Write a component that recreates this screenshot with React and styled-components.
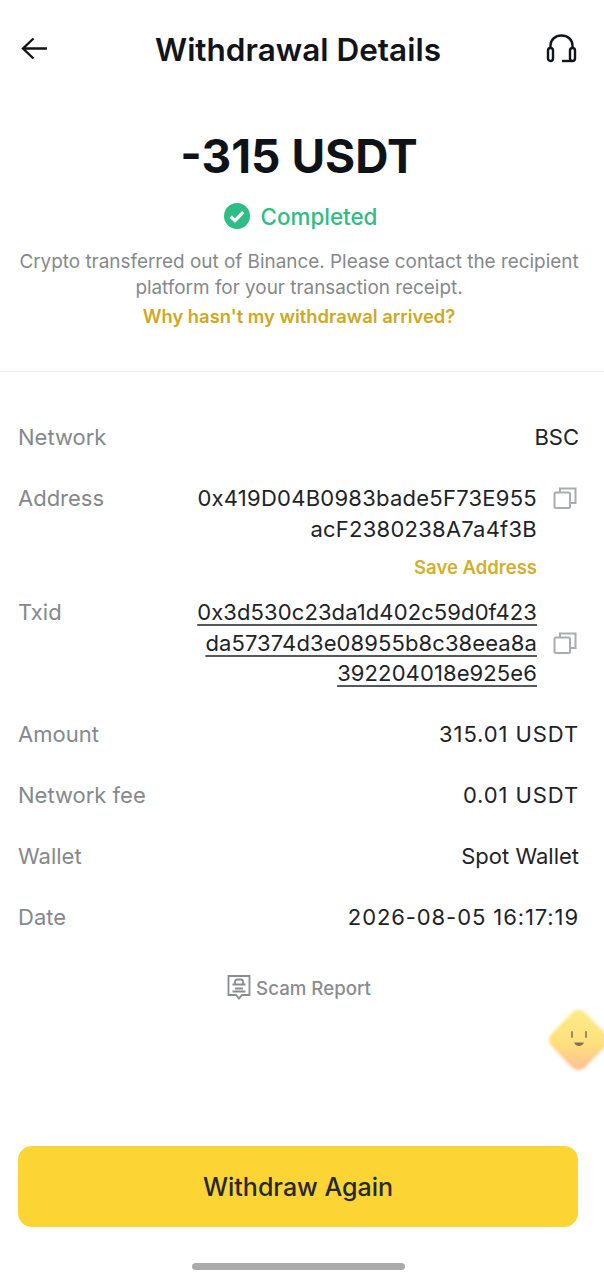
import React from "react";
import styled, { createGlobalStyle } from "styled-components";

const GlobalStyle = createGlobalStyle`
  html, body {
    margin: 0;
    padding: 0;
    background: #fff;
  }
  * {
    box-sizing: border-box;
  }
`;

const Page = styled.div`
  position: relative;
  width: 604px;
  height: 1280px;
  overflow: hidden;
  display: flex;
  flex-direction: column;
  background: #fff;
  color: #1e2329;
  font-family: Inter, "Liberation Sans", sans-serif;
`;

// 상단 헤더
const Header = styled.header`
  height: 100px;
  padding: 0 26px 2px 20px;
  display: flex;
  align-items: center;
  justify-content: space-between;
`;

const Title = styled.h1`
  margin: 0;
  font-size: 31.5px;
  font-weight: 600;
  color: #111418;
`;

const IconButton = styled.span`
  display: flex;
  width: 32px;
  height: 32px;
  align-items: center;
  justify-content: center;
`;

// 금액, 상태
const Summary = styled.section`
  height: 272px;
  padding: 26px 6px 0 0;
  display: flex;
  flex-direction: column;
  align-items: center;
  border-bottom: 1px solid #eeeff1;
`;

const Amount = styled.div`
  font-size: 46px;
  line-height: 60px;
  font-weight: 700;
  color: #0f1216;
`;

const Status = styled.div`
  margin: 15px 0 0 3px;
  height: 30px;
  display: flex;
  align-items: center;
  gap: 11px;
  font-size: 22.4px;
  font-weight: 500;
  color: #2ebd85;
`;

const Notice = styled.p`
  margin: 18px 0 0;
  font-size: 18.9px;
  line-height: 26px;
  color: #85888c;
  text-align: center;
`;

const HelpLink = styled.div`
  margin-top: 2px;
  font-size: 18.4px;
  line-height: 26px;
  font-weight: 600;
  color: #d0a81e;
`;

// 상세 내역
const Details = styled.section`
  padding: 50px 26px 0 18px;
  display: flex;
  flex-direction: column;
`;

const Row = styled.div`
  display: flex;
  justify-content: space-between;
  align-items: flex-start;
  padding-bottom: ${(props) => (props.$tight ? "18px" : "30.5px")};
  font-size: 22px;
  line-height: 30.5px;
`;

const Label = styled.span`
  color: #85888c;
`;

const Value = styled.span`
  color: #1e2329;
  text-align: right;
  margin-right: -1px;
  letter-spacing: ${(props) => (props.$numeric ? "0.9px" : "0")};
`;

const AddressBox = styled.div`
  display: flex;
  align-items: ${(props) => (props.$top ? "flex-start" : "center")};
  gap: 16px;
`;

const Hash = styled.div`
  text-align: right;
  letter-spacing: ${(props) => (props.$link ? "0.1px" : "0.25px")};
  text-decoration: ${(props) => (props.$link ? "underline" : "none")};
  text-decoration-color: #55585c;
  text-underline-offset: 4px;
  text-decoration-thickness: 1.5px;
`;

const CopyButton = styled.span`
  display: flex;
  margin-top: ${(props) => (props.$top ? "3px" : "0")};
`;

const AddressColumn = styled.div`
  display: flex;
  flex-direction: column;
  align-items: flex-end;
  margin-right: 1px;
`;

const SaveAddress = styled.div`
  margin: 11px 40px 0 0;
  font-size: 18.5px;
  line-height: 24px;
  font-weight: 600;
  color: #d4ae2c;
`;

const ScamReport = styled.div`
  margin-top: 11px;
  padding-right: 6px;
  display: flex;
  justify-content: center;
  align-items: center;
  gap: 5px;
  font-size: 18.7px;
  font-weight: 500;
  color: #8a8c8f;
`;

// 하단 버튼
const Footer = styled.footer`
  margin-top: auto;
  padding: 0 26px 10px 18px;
  display: flex;
  flex-direction: column;
  align-items: center;
`;

const PrimaryButton = styled.button`
  width: 100%;
  height: 81px;
  border: 0;
  border-radius: 14px;
  background: #fcd535;
  color: #25282c;
  font-family: inherit;
  font-size: 25px;
  font-weight: 500;
`;

const HomeBar = styled.div`
  margin-top: 36px;
  width: 213px;
  height: 7px;
  border-radius: 4px;
  background: #ababab;
`;

// 떠있는 도우미 버튼
const Floating = styled.div`
  position: absolute;
  left: 544px;
  top: 1004px;
  width: 70px;
  height: 72px;
`;

const BackIcon = () => (
  <svg width="30" height="26" viewBox="0 0 30 26" fill="none" stroke="#111418" strokeWidth="2.4">
    <path d="M3 12.5h24M13.5 2.5 3 12.5l10.500 10" />
  </svg>
);

const HeadsetIcon = () => (
  <svg width="32" height="32" viewBox="0 0 32 32" fill="none" stroke="#111418" strokeWidth="2.4">
    <path d="M4.5 15v-2.500C4.500 6.500 9.500 2.500 15.500 2.500s11 4 11 10V15" />
    <rect x="2" y="15" width="5" height="13" rx="2.500" />
    <rect x="24" y="15" width="5" height="13" rx="2.500" />
    <path d="M16 28h10.500" />
  </svg>
);

const CheckIcon = () => (
  <svg width="26" height="26" viewBox="0 0 26 26">
    <circle cx="13" cy="13" r="13" fill="#2ebd85" />
    <path d="m6.800 13.500 4.200 4.200 8.200-8.600" fill="none" stroke="#fff" strokeWidth="3.200" />
  </svg>
);

const CopyIcon = () => (
  <svg width="24" height="24" viewBox="0 0 24 24" fill="none" stroke="#a9acb0" strokeWidth="2">
    <rect x="1.500" y="6.500" width="15.500" height="15.500" rx="1.500" />
    <path d="M7 6.500V2.500h15.500v14.500h-5.500" />
  </svg>
);

const ReportIcon = () => (
  <svg width="24" height="28" viewBox="0 0 24 28" fill="none" stroke="#8a8c8f" strokeWidth="1.800">
    <path d="M1.500 2h21v19h-7.500L12 24.500 9 21H1.500z" />
    <path d="M8 10V7.500a2 2 0 0 1 2-2h4a2 2 0 0 1 2 2V10M5.500 10.500h13M8 14.500h8M5.500 17.500h13" />
  </svg>
);

const HelperIcon = () => (
  <svg width="70" height="72" viewBox="0 0 70 72">
    <defs>
      <linearGradient id="helperFill" x1="0.500" y1="0" x2="0.500" y2="1">
        <stop offset="0" stopColor="#fdeb85" />
        <stop offset="0.550" stopColor="#fde07c" />
        <stop offset="1" stopColor="#fdc092" />
      </linearGradient>
      <filter id="helperBlur" x="-20%" y="-20%" width="140%" height="140%">
        <feGaussianBlur stdDeviation="1.500" />
      </filter>
    </defs>
    <path
      d="M27 9.500a10 10 0 0 1 15 0l20 21a8 8 0 0 1 0 11l-20 21a10 10 0 0 1-15 0l-20-21a8 8 0 0 1 0-11z"
      fill="url(#helperFill)"
      filter="url(#helperBlur)"
    />
    <path d="M28 28v5M42 28v5" stroke="#8d8058" strokeWidth="1.800" strokeLinecap="round" />
    <path d="M30 38.500h10c-1 2.500-3 3.500-5 3.500s-4-1-5-3.500z" fill="#7f7155" />
  </svg>
);

const App = () => {
  return (
    <Page>
      <GlobalStyle />
      <Header>
        <BackIcon />
        <Title>Withdrawal Details</Title>
        <IconButton>
          <HeadsetIcon />
        </IconButton>
      </Header>

      <Summary>
        <Amount>-315 USDT</Amount>
        <Status>
          <CheckIcon />
          Completed
        </Status>
        <Notice>
          Crypto transferred out of Binance. Please contact the recipient
          <br />
          platform for your transaction receipt.
        </Notice>
        <HelpLink>Why hasn't my withdrawal arrived?</HelpLink>
      </Summary>

      <Details>
        <Row>
          <Label>Network</Label>
          <Value>BSC</Value>
        </Row>
        <Row $tight>
          <Label>Address</Label>
          <AddressColumn>
            <AddressBox $top>
              <Hash>
                0x419D04B0983bade5F73E955
                <br />
                acF2380238A7a4f3B
              </Hash>
              <CopyButton $top>
                <CopyIcon />
              </CopyButton>
            </AddressBox>
            <SaveAddress>Save Address</SaveAddress>
          </AddressColumn>
        </Row>
        <Row>
          <Label>Txid</Label>
          <AddressColumn>
            <AddressBox>
              <Hash $link>
                0x3d530c23da1d402c59d0f423
                <br />
                da57374d3e08955b8c38eea8a
                <br />
                392204018e925e6
              </Hash>
              <CopyButton>
                <CopyIcon />
              </CopyButton>
            </AddressBox>
          </AddressColumn>
        </Row>
        <Row>
          <Label>Amount</Label>
          <Value $numeric>315.01 USDT</Value>
        </Row>
        <Row>
          <Label>Network fee</Label>
          <Value $numeric>0.01 USDT</Value>
        </Row>
        <Row>
          <Label>Wallet</Label>
          <Value>Spot Wallet</Value>
        </Row>
        <Row>
          <Label>Date</Label>
          <Value $numeric>2026-08-05 16:17:19</Value>
        </Row>
      </Details>

      <ScamReport>
        <ReportIcon />
        Scam Report
      </ScamReport>

      <Floating>
        <HelperIcon />
      </Floating>

      <Footer>
        <PrimaryButton>Withdraw Again</PrimaryButton>
        <HomeBar />
      </Footer>
    </Page>
  );
};

export default App;
